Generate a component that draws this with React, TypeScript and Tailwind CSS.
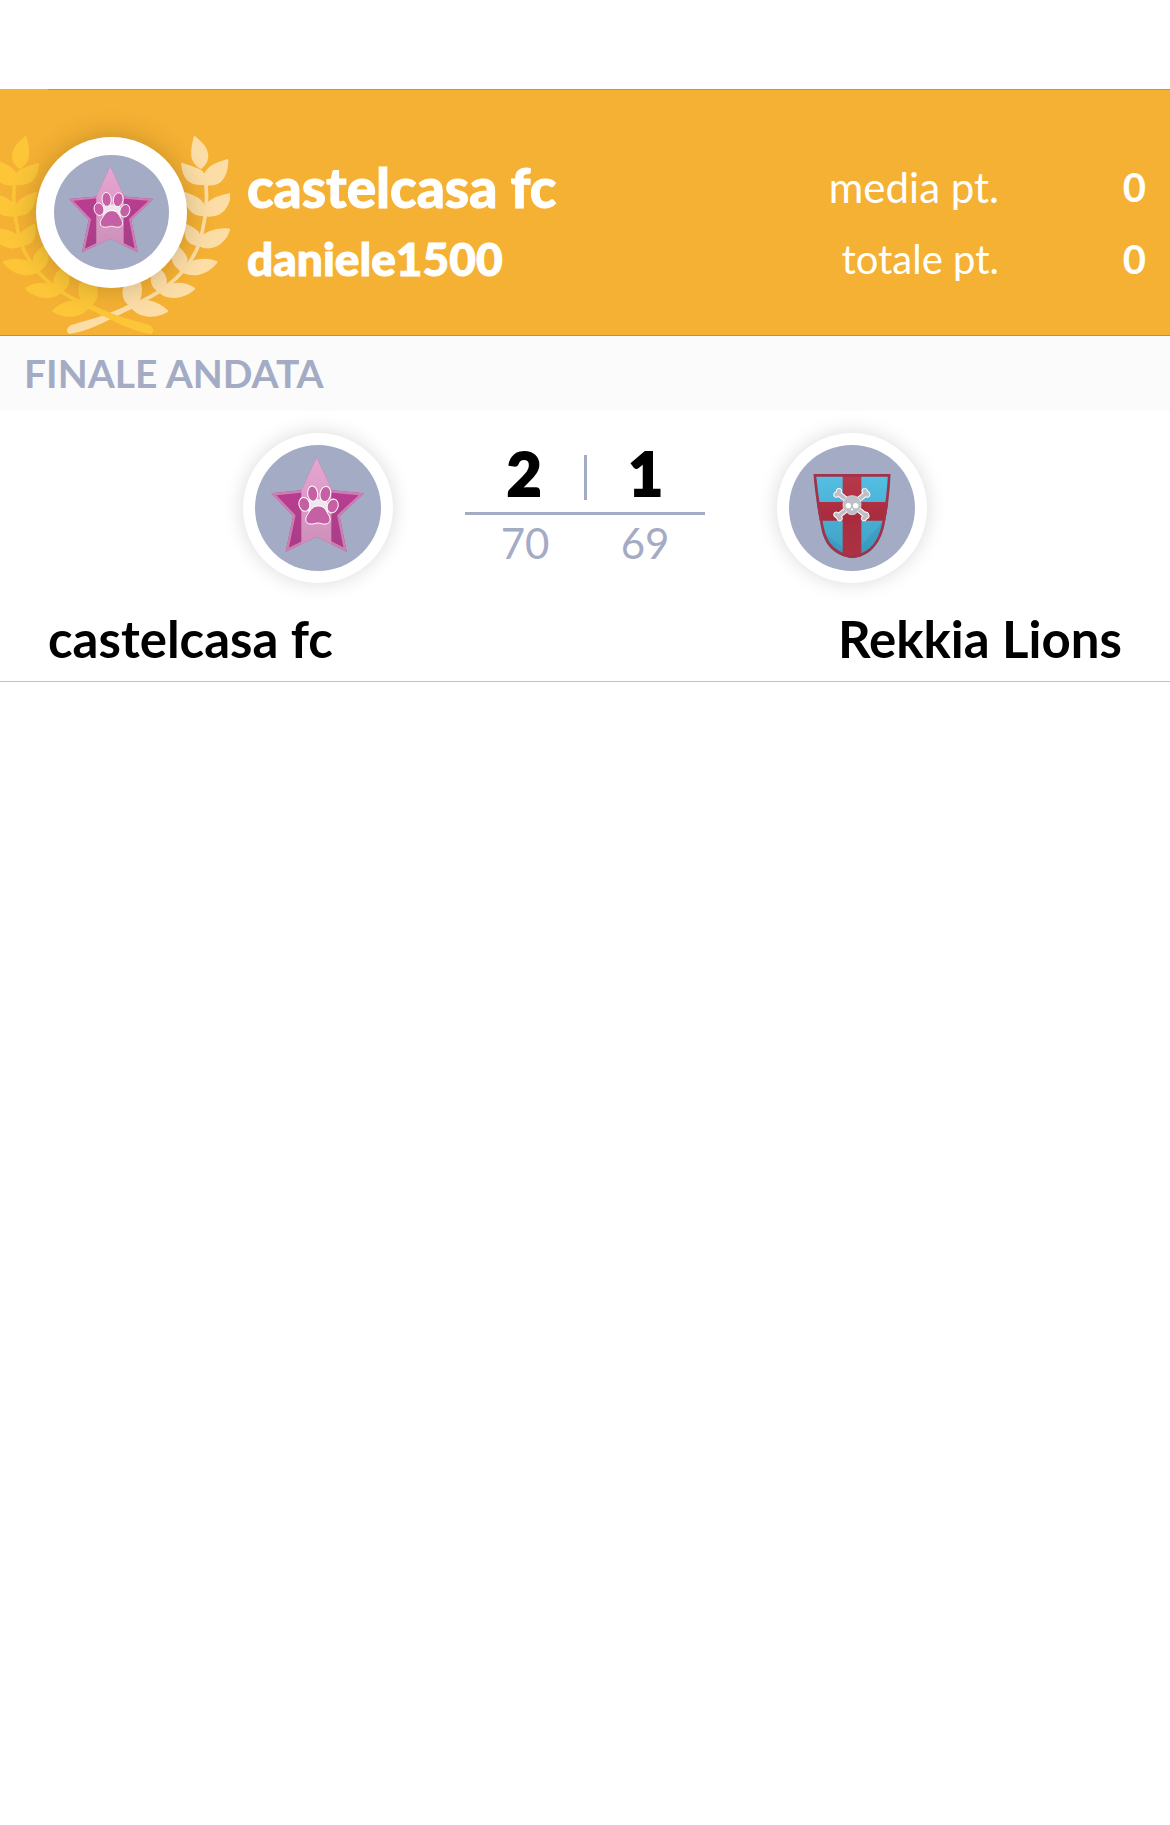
import { clsx } from "clsx";

interface Team {
  name: string;
  goals: number;
  points: number;
  crest: React.ElementType;
}

const STAR_PATH =
  "M260 143 L306 241 L402 250 L329 318 L350 425 L260 380 L167 425 L189 318 L124 250 L214 241 Z";

const SHIELD_PATH =
  "M145 192 H377 C374 245 369 290 360 335 C350 395 320 432 276 442 Q262 446 248 442 C205 430 178 405 168 350 C157 295 150 245 145 192 Z";

const LEAVES = [
  "M584 172 C580 195 574 210 578 232 C582 250 592 258 603 263 C614 254 624 242 621 222 C618 200 602 188 584 172 Z",
  "M682 241 C650 252 606 262 613 312 C655 318 680 300 682 241 Z",
  "M547 252 C550 290 565 316 613 311 C622 266 585 268 547 252 Z",
  "M690 343 C655 350 608 362 612 405 C655 412 682 392 690 343 Z",
  "M554 339 C560 380 572 406 614 405 C618 362 590 352 554 339 Z",
  "M687 449 C650 446 600 458 595 494 C632 514 672 494 687 449 Z",
  "M558 435 C554 470 560 492 598 496 C606 452 582 448 558 435 Z",
  "M649 546 C612 534 568 540 540 570 C572 590 616 588 649 546 Z",
  "M530 499 C514 525 512 555 547 570 C572 540 554 520 530 499 Z",
  "M582 626 C552 606 508 606 478 634 C502 660 552 654 582 626 Z",
  "M470 563 C450 586 448 622 484 636 C508 606 496 580 470 563 Z",
  "M501 693 C470 664 424 652 394 676 C412 710 462 716 501 693 Z",
  "M378 608 C364 640 370 668 402 680 C426 655 424 625 420 612 Z",
];

function LaurelBranch() {
  return (
    <g>
      <g stroke="currentColor" strokeWidth="7" strokeLinejoin="round">
        {LEAVES.map((d) => (
          <path key={d} d={d} />
        ))}
      </g>
      <path
        d="M616 300 C624 350 620 410 598 490 C560 590 480 650 330 704"
        fill="none"
        stroke="currentColor"
        strokeWidth="11"
      />
      <path d="M400 664 C350 700 262 720 212 736 C200 744 196 756 208 762 C270 754 320 722 406 682 Z" />
    </g>
  );
}

function Laurel({ className }: { className?: string }) {
  return (
    <svg viewBox="0 30 690 735" className={className} fill="currentColor" aria-hidden="true">
      <g className="text-[#fcdda5]">
        <LaurelBranch />
      </g>
      <g className="text-[#fcc638]" transform="translate(661 0) scale(-1 1)">
        <LaurelBranch />
      </g>
    </svg>
  );
}

function StarCrest({ className }: { className?: string }) {
  return (
    <svg viewBox="75 105 378 378" className={className} aria-hidden="true">
      <defs>
        <linearGradient id="star-dark" x1="0" y1="0" x2="0" y2="1">
          <stop offset="0" stopColor="#c43c98" />
          <stop offset="1" stopColor="#a63e86" />
        </linearGradient>
        <linearGradient id="star-light" x1="0" y1="0" x2="0" y2="1">
          <stop offset="0" stopColor="#e8a6d2" />
          <stop offset="1" stopColor="#cb8db8" />
        </linearGradient>
        <clipPath id="star-clip">
          <path d={STAR_PATH} />
        </clipPath>
      </defs>
      <path d={STAR_PATH} fill="url(#star-dark)" />
      <g clipPath="url(#star-clip)">
        <path d={STAR_PATH} fill="none" stroke="#cf7db4" strokeWidth="14" />
        <path d="M214 140h90v290h-90z" fill="url(#star-light)" />
      </g>
      <path d="M236 268 L290 268 L300 300 L290 312 L238 312 L232 296 Z" fill="#f1e6ee" />
      <g fill="#c660a4" stroke="#fff" strokeWidth="3">
        <ellipse cx="248" cy="251" rx="15" ry="23" transform="rotate(-6 248 251)" />
        <ellipse cx="286" cy="252" rx="16" ry="23" transform="rotate(10 286 252)" />
        <ellipse cx="223" cy="283" rx="16" ry="21" transform="rotate(-14 223 283)" />
        <ellipse cx="308" cy="288" rx="16" ry="21" transform="rotate(18 308 288)" />
        <path d="M265 288 C282 288 288 300 294 312 C304 326 302 340 288 342 C278 344 272 339 264 339 C255 339 249 344 240 342 C225 340 224 326 233 313 C241 300 248 288 265 288 Z" />
      </g>
    </svg>
  );
}

function ShieldCrest({ className }: { className?: string }) {
  return (
    <svg viewBox="72 105 378 378" className={className} aria-hidden="true">
      <defs>
        <linearGradient id="shield-blue" x1="0" y1="0" x2="0" y2="1">
          <stop offset="0" stopColor="#55bfe4" />
          <stop offset="1" stopColor="#3f9fc4" />
        </linearGradient>
        <linearGradient id="shield-red" x1="0" y1="0" x2="0" y2="1">
          <stop offset="0" stopColor="#b93a4c" />
          <stop offset="0.5" stopColor="#a92c3e" />
          <stop offset="1" stopColor="#ac3245" />
        </linearGradient>
        <clipPath id="shield-clip">
          <path d={SHIELD_PATH} />
        </clipPath>
      </defs>
      <path d={SHIELD_PATH} fill="url(#shield-blue)" />
      <g clipPath="url(#shield-clip)">
        <path d="M165 360 L262 435 L350 340 V450 H165 Z" fill="#2f88ad" opacity="0.3" />
        <path d="M233 190h56v256h-56z M140 276h240v56h-240z" fill="url(#shield-red)" />
        <path d={SHIELD_PATH} fill="none" stroke="#a33249" strokeWidth="16" />
      </g>
      <g stroke="#fff" strokeWidth="17" strokeLinecap="round">
        <path d="M219 249 L305 319 M305 249 L219 319" />
      </g>
      <g fill="#bfc0c6" stroke="#fff" strokeWidth="3">
        <circle cx="222" cy="243" r="8" />
        <circle cx="214" cy="254" r="8" />
        <circle cx="299" cy="243" r="8" />
        <circle cx="307" cy="254" r="8" />
        <circle cx="214" cy="314" r="8" />
        <circle cx="224" cy="325" r="8" />
        <circle cx="303" cy="314" r="8" />
        <circle cx="297" cy="325" r="8" />
      </g>
      <path
        d="M219 249 L305 319 M305 249 L219 319"
        stroke="#bfc0c6"
        strokeWidth="11"
        strokeLinecap="round"
      />
      <path
        d="M261 257 C279 257 289 270 288 286 C287 297 281 301 277 303 C276 311 270 314 261 314 C252 314 246 311 245 303 C240 301 234 297 234 286 C233 270 243 257 261 257 Z"
        fill="#bfc0c6"
        stroke="#e8e8ea"
        strokeWidth="2"
      />
      <g fill="#fff">
        <circle cx="250" cy="287" r="8" />
        <circle cx="272" cy="287" r="8" />
        <path d="M261 293 l4 8 h-8 z" />
      </g>
    </svg>
  );
}

function Badge({
  crest: Crest,
  className,
}: {
  crest: React.ElementType;
  className?: string;
}) {
  return (
    <div className={clsx("shrink-0 rounded-full bg-white", className)}>
      <div className="size-full overflow-hidden rounded-full bg-[#a4abc4]">
        <Crest className="size-full" />
      </div>
    </div>
  );
}

const home: Team = { name: "castelcasa fc", goals: 2, points: 70, crest: StarCrest };
const away: Team = { name: "Rekkia Lions", goals: 1, points: 69, crest: ShieldCrest };

const stats = [
  { label: "media pt.", value: 0, size: "text-[42px]" },
  { label: "totale pt.", value: 0, size: "text-[40px]" },
];

function WinnerHeader() {
  return (
    <header className="relative flex items-center border-b border-[#c98f2b] bg-[#f5b133] pr-6 text-white">
      <Laurel className="absolute bottom-0 left-0 h-[245px] w-[230px]" />
      <Badge
        crest={StarCrest}
        className="relative ml-9 size-[151px] p-[18px] shadow-[0_0_30px_rgba(0,0,0,0.2)]"
      />
      <div className="ml-[60px] flex flex-1 justify-between pt-[61px] pb-10">
        <div className="font-['Lato_Black','Lato',sans-serif] font-black [-webkit-text-stroke:1px_currentColor]">
          <h1 className="text-[55px] leading-[72px]">castelcasa fc</h1>
          <p className="text-[46px] leading-[72px]">daniele1500</p>
        </div>
        <dl>
          {stats.map((stat) => (
            <div key={stat.label} className="flex justify-end leading-[72px]">
              <dt className={clsx("leading-[72px]", stat.size)}>{stat.label}</dt>
              <dd className="w-[147px] text-right text-[40px] leading-[72px] font-bold">
                {stat.value}
              </dd>
            </div>
          ))}
        </dl>
      </div>
    </header>
  );
}

function Score() {
  return (
    <div className="w-60 text-center">
      <div className="flex h-[79px] items-center font-['Lato_Black','Lato',sans-serif] text-[60px] font-black [-webkit-text-stroke:2px_currentColor]">
        <span className="flex-1">{home.goals}</span>
        <span className="mt-[10px] h-[45px] w-[3px] bg-[#a4abc4]" />
        <span className="flex-1">{away.goals}</span>
      </div>
      <div className="flex border-t-3 border-[#a4abc4] text-[42px] leading-[57px] text-[#a4abc4]">
        <span className="flex-1">{home.points}</span>
        <span className="flex-1">{away.points}</span>
      </div>
    </div>
  );
}

export default function App() {
  return (
    <div className="min-h-screen bg-white pt-[89px] font-['Lato',sans-serif] text-black">
      {/* Row separator, inset on the left */}
      <div className="bg-[#f5b133]">
        <div className="ml-12 h-px bg-[#bd9650]" />
      </div>
      <WinnerHeader />

      <h2 className="bg-[#fbfbfb] px-6 text-[39px] leading-[75px] font-bold text-[#a4abc4]">
        FINALE ANDATA
      </h2>

      <section className="border-b border-[#c2c2c4] pt-[22px] pb-3">
        <div className="flex justify-center gap-18">
          <Badge
            crest={home.crest}
            className="size-[150px] p-3 shadow-[0_0_20px_rgba(0,0,0,0.15)]"
          />
          <Score />
          <Badge
            crest={away.crest}
            className="size-[150px] p-3 shadow-[0_0_20px_rgba(0,0,0,0.15)]"
          />
        </div>
        <div className="mt-[26px] flex justify-between px-12 text-[51px] leading-[60px] font-bold">
          <span>{home.name}</span>
          <span>{away.name}</span>
        </div>
      </section>
    </div>
  );
}
